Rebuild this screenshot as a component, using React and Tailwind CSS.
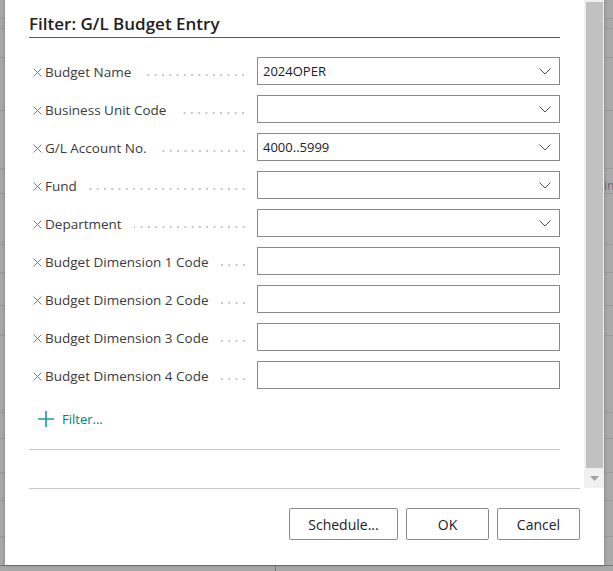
import { Fragment } from "react";

const rows = [
  { label: "Budget Name", value: "2024OPER", lookup: true },
  { label: "Business Unit Code", value: "", lookup: true },
  { label: "G/L Account No.", value: "4000..5999", lookup: true },
  { label: "Fund", value: "", lookup: true },
  { label: "Department", value: "", lookup: true },
  { label: "Budget Dimension 1 Code", value: "" },
  { label: "Budget Dimension 2 Code", value: "" },
  { label: "Budget Dimension 3 Code", value: "" },
  { label: "Budget Dimension 4 Code", value: "" },
];

function Chevron() {
  return (
    <svg width="12" height="7" viewBox="0 0 12 7" className="text-[#505050]">
      <path d="M0.5 0.5 L6 6 L11.5 0.5" fill="none" stroke="currentColor" strokeWidth="1" />
    </svg>
  );
}

function ClearIcon() {
  return (
    <svg width="9" height="9" viewBox="0 0 9 9" className="mr-[3px] mt-[1px]">
      <path d="M0.5 0.5 L8.5 8.5 M8.5 0.5 L0.5 8.5" stroke="#7a7a7a" strokeWidth="1" fill="none" />
    </svg>
  );
}

function FilterRow({ label, value, lookup }) {
  return (
    <div className="flex items-center h-[28px]">
      <div className="w-[228px] flex items-center pl-[4px] text-[13.5px] text-[#3b3b3b] pt-[2px]">
        <ClearIcon />
        <span className="whitespace-nowrap">{label}</span>
        <span className="flex-1 ml-[12px] mr-[10px] mt-[5px] h-[2px] bg-[radial-gradient(circle,#c4c4c4_0.7px,transparent_1px)] bg-[length:7.3px_2px] bg-right bg-repeat-x"></span>
      </div>
      <div className="flex-1 h-[28px] border border-[#8a8a8a] flex items-center pl-[5px] pr-[8px] text-[13px] text-[#212121]">
        <span className="flex-1 pt-[2px]">{value}</span>
        {lookup && <Chevron />}
      </div>
    </div>
  );
}

export default function App() {
  return (
    <div
      className="w-[613px] h-[571px] bg-[#a9a9a9] relative overflow-hidden"
      style={{ fontFamily: '"Segoe UI", "Open Sans", "Noto Sans", sans-serif' }}
    >
      {/* page behind the dialog */}
      <div className="absolute inset-0">
        {[18, 28, 57, 110, 168, 193, 244, 272, 305, 335, 412, 438, 472, 500, 536].map((y) => (
          <div key={y} className="absolute left-0 right-0 h-px bg-[#9a9a9a]" style={{ top: y }} />
        ))}
        <div className="absolute left-0 right-0 top-[565px] h-px bg-[#777]" />
        <div className="absolute left-[275px] top-[565px] bottom-0 w-px bg-[#777]" />
        <span className="absolute left-[604px] top-[177px] text-[12px] text-[#6a6a7a]">in</span>
      </div>

      <div className="absolute left-[5px] top-0 w-[599px] h-[565px] bg-white flex flex-col shadow-[0_0_4px_rgba(0,0,0,0.25)]">
        <div className="flex h-[488px]">
          <div className="flex-1 pl-[24px] pr-[24px]">
            <div className="pt-[12px] pb-[1px] border-b border-[#4f5b67] text-[17px] font-semibold text-[#212121] leading-[24px]">
              Filter: G/L Budget Entry
            </div>
            <div className="mt-[19px] flex flex-col gap-[10px]">
              {rows.map((r) => (
                <Fragment key={r.label}>
                  <FilterRow {...r} />
                </Fragment>
              ))}
            </div>
            <div className="mt-[20px] h-[20px] flex items-center pl-[9px] text-[#00807f] text-[13px]">
              <svg width="16" height="16" viewBox="0 0 16 16" className="mr-[8px]">
                <path d="M8 0 V16 M0 8 H16" stroke="#1f9a9a" strokeWidth="1.6" fill="none" />
              </svg>
              <span className="pt-[1px]">Filter...</span>
            </div>
            <div className="mt-[20px] border-b border-[#c8c8c8]"></div>
          </div>
          <div className="w-[20px] bg-[#f0f0f0] flex flex-col items-center">
            <div className="w-[17px] mt-[2px] h-[466px] bg-[#c1c1c1]"></div>
            <div className="flex-1 flex items-center justify-center">
              <svg width="9" height="5" viewBox="0 0 9 5">
                <path d="M0 0 H9 L4.5 5 Z" fill="#a3a3a3" />
              </svg>
            </div>
          </div>
        </div>
        <div className="ml-[24px] mr-[24px] border-t border-[#c8c8c8]"></div>
        <div className="flex justify-end gap-[8px] pr-[24px] pt-[19px]">
          {[
            ["Schedule...", "w-[109px]"],
            ["OK", "w-[83px]"],
            ["Cancel", "w-[83px]"],
          ].map(([t, w]) => (
            <button
              key={t}
              className={`${w} h-[32px] border border-[#8a8a8a] rounded-[2px] bg-white text-[14px] text-[#212121] pt-[1px]`}
            >
              {t}
            </button>
          ))}
        </div>
      </div>
    </div>
  );
}
